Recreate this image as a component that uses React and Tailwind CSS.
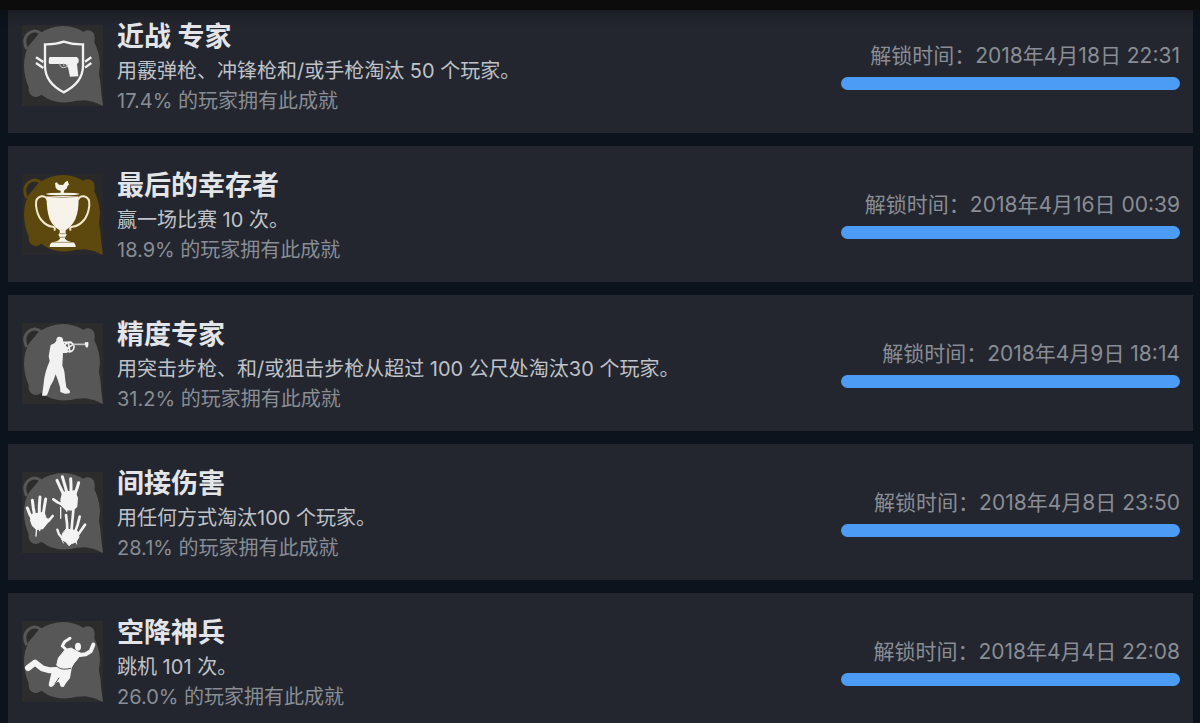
const achievements = [
  {
    id: "close",
    title: "近战 专家",
    text: "用霰弹枪、冲锋枪和/或手枪淘汰 50 个玩家。",
    percent: "17.4%",
    unlocked: "2018年4月18日 22:31",
    icon: PistolIcon,
  },
  {
    id: "survivor",
    title: "最后的幸存者",
    text: "赢一场比赛 10 次。",
    percent: "18.9%",
    unlocked: "2018年4月16日 00:39",
    icon: TrophyIcon,
    gold: true,
  },
  {
    id: "precision",
    title: "精度专家",
    text: "用突击步枪、和/或狙击步枪从超过 100 公尺处淘汰30 个玩家。",
    percent: "31.2%",
    unlocked: "2018年4月9日 18:14",
    icon: SoldierIcon,
  },
  {
    id: "indirect",
    title: "间接伤害",
    text: "用任何方式淘汰100 个玩家。",
    percent: "28.1%",
    unlocked: "2018年4月8日 23:50",
    icon: HandsIcon,
  },
  {
    id: "airborne",
    title: "空降神兵",
    text: "跳机 101 次。",
    percent: "26.0%",
    unlocked: "2018年4月4日 22:08",
    icon: DiverIcon,
  },
];

function PistolIcon() {
  return (
    <g transform="translate(-67 -76)">
      <path
        d="M136 134Q168 135 192 126Q218 135 250 134V200Q249 250 192 278Q137 250 136 200Z"
        fill="none"
        stroke="#f1f1f1"
        strokeWidth="7"
      />
      <path
        d="M148 174L151 172H232L234 175L237 178V188L232 193L236 230L211 231L206 207Q204 199 197 193H150L147 189Z"
        fill="#f1f1f1"
      />
      <path
        d="M180 191Q181 204 192 204Q203 204 205 194M192 191L193 200"
        fill="none"
        stroke="#c8c8c8"
        strokeWidth="3"
      />
      <path
        d="M109 173L131 187M109 190L131 205M275 173L256 186M275 190L256 204"
        stroke="#f1f1f1"
        strokeWidth="7"
      />
    </g>
  );
}

function TrophyIcon() {
  return (
    <g transform="translate(-67 -38)" fill="#f7f3ea">
      <path d="M166 66L171 63L178 70L190 71L197 62L204 58L206 66L209 69L204 73L202 81L194 87L192 95H183V88L174 86L168 79Z" />
      <ellipse cx="189" cy="98" rx="50" ry="4" />
      <path d="M141 104H236Q239 145 227 174Q216 196 198 207V216Q204 221 197 226L196 232Q202 240 220 243Q228 246 228 257H150Q150 246 158 243Q176 240 181 232L180 226Q173 221 180 216V207Q160 196 150 174Q140 145 141 104Z" />
      <path
        d="M143 117Q140 104 125 105Q107 109 109 132Q112 160 125 176Q141 195 159 196Q169 198 164 208M235 117Q238 104 253 105Q271 109 269 132Q266 160 253 176Q237 195 218 196Q208 198 213 208"
        fill="none"
        stroke="#f2e9cf"
        strokeWidth="6"
      />
      <path
        d="M142 105Q189 112 236 105M181 217H198M180 228H198M158 243H219"
        fill="none"
        stroke="#7d6b34"
        strokeWidth="2"
      />
    </g>
  );
}

function SoldierIcon() {
  return (
    <g transform="translate(-67 -36)" fill="#f1f1f1">
      <path d="M170 90Q169 77 180 77Q192 78 190 90L194 98L206 112L202 126L190 126L189 146L188 164Q195 176 196 200L200 229L211 240L210 247L196 248L182 243L181 228L174 206L168 190L161 209L152 225L144 248L140 254H127L129 240L131 226L134 200Q138 180 144 165L150 150L147 136L150 118L153 102L164 97Z" />
      <circle cx="209" cy="108" r="14" fill="none" stroke="#f1f1f1" strokeWidth="5" />
      <path
        d="M188 94H216M199 116L220 100M206 96L211 124"
        stroke="#f1f1f1"
        strokeWidth="5"
      />
      <path d="M220 100H262" stroke="#c4c4c4" strokeWidth="5" />
      <path d="M255 94L266 93V105L263 110L258 108Z" />
    </g>
  );
}

function HandsIcon() {
  return (
    <g
      transform="translate(-67 -37)"
      fill="#f4f4f4"
      stroke="#f4f4f4"
      strokeLinecap="round"
      strokeLinejoin="round"
    >
      <path
        d="M98 165L132 159L139 178L148 180L137 195L128 206L111 208L99 196L94 182Z"
        strokeWidth="6"
      />
      <path d="M99 180L90 163L83 145M105 168L101 145L98 122M119 165L119 138L121 112M130 168L134 142L138 118" strokeWidth="9" />
      <path d="M136 191L148 182L159 169" fill="none" strokeWidth="8" />
      <path d="M111 205L109 229M120 205V213" strokeWidth="4" />

      <path
        d="M190 99L224 95L232 115L230 140L220 150L199 149L187 137L185 120Z"
        strokeWidth="6"
      />
      <path d="M192 104L181 82L172 62M202 100L195 75L188 51M214 98L214 77L213 57M226 103L232 86L237 69" strokeWidth="9" />
      <path d="M191 136L174 128L161 119" fill="none" strokeWidth="8" />
      <path d="M183 143V176M219 148V163M201 149V155" strokeWidth="4" />

      <path
        d="M200 208L232 213L238 232L229 247L215 252L208 258L199 247L187 240L188 223Z"
        strokeWidth="3"
      />
      <path d="M203 216L202 191L199 166M215 216L218 184L221 152M226 218L234 195L240 171M233 228L245 211L256 195" strokeWidth="8" />
      <path d="M190 238L178 224L173 210" fill="none" strokeWidth="7" />
      <path d="M186 238L191 250M230 246L231 253" strokeWidth="3" />
    </g>
  );
}

function DiverIcon() {
  return (
    <g
      transform="translate(-67 -46)"
      fill="#f4f4f4"
      stroke="#f4f4f4"
      strokeLinecap="round"
      strokeLinejoin="round"
    >
      <ellipse cx="235" cy="123" rx="9" ry="12" stroke="none" />
      <path
        d="M197 132L214 127L230 136L244 143L235 158L222 174L213 189L196 193L176 187L171 179L176 158Z"
        strokeWidth="3"
      />
      <path d="M204 136L188 121L195 108L211 98" fill="none" strokeWidth="9" />
      <path d="M235 149L258 146L273 137L281 117" fill="none" strokeWidth="12" />
      <path d="M172 193L150 194L128 188L106 171L85 187" fill="none" strokeWidth="18" />
      <path d="M165 190L212 188L207 216L188 239L176 220L158 237Z" strokeWidth="8" />
      <path d="M162 204L154 237M204 205L188 237" strokeWidth="14" />
      <path
        d="M170 181Q182 193 202 190L213 188"
        fill="none"
        stroke="#555557"
        strokeWidth="3"
      />
      <path d="M178 217L166 234" stroke="#555557" strokeWidth="3" />
    </g>
  );
}

function Badge({ icon: Icon, gold }) {
  const color = gold ? "#5d490d" : "#575758";
  return (
    <svg
      viewBox="0 0 243 243"
      className="size-[81px] shrink-0"
      aria-hidden="true"
    >
      <rect width="243" height="243" fill={gold ? "#29292b" : "#2c2c2d"} />
      <path
        d="M50 26Q86 3 124 3Q160 5 184 20Q204 9 216 27Q220 40 217 52Q232 82 234 117L231 147L235 171L238 205L243 243L218 232L190 226L164 227Q118 240 78 222L58 209Q44 220 31 213Q18 206 20 187Q7 158 6 122Q6 88 20 62L34 46Z"
        fill={color}
      />
      <path
        d="M14 72Q0 42 20 25Q38 11 56 25"
        fill="none"
        stroke={color}
        strokeWidth="9"
      />
      <Icon />
    </svg>
  );
}

function Achievement({ item }) {
  return (
    <li className="flex min-h-[136px] items-center bg-[#23262e] pr-[13px] pl-[14px]">
      <Badge icon={item.icon} gold={item.gold} />
      <div className="ml-[14px] min-w-0 flex-1 pt-1">
        <h3 className="text-[27px] leading-[38px] font-bold text-[#e3e5e8]">
          {item.title}
        </h3>
        <p className="text-xl leading-[30px] text-[#bfc2c8]">{item.text}</p>
        <p className="text-xl leading-[30px] text-[#898d95]">
          {item.percent} 的玩家拥有此成就
        </p>
      </div>
      <div className="flex w-[339px] shrink-0 flex-col gap-[5px]">
        <p className="text-right text-[21px] leading-8 text-[#898d95]">
          解锁时间：{item.unlocked}
        </p>
        <div
          role="progressbar"
          aria-label={item.title}
          aria-valuenow={100}
          className="h-[13px] rounded-full bg-[#4c9bf5]"
        />
      </div>
    </li>
  );
}

export default function App() {
  return (
    <div className="h-screen overflow-hidden bg-[#0d131c] font-[Inter,'Noto_Sans_CJK_SC',sans-serif]">
      <header className="relative z-10 h-[10px] bg-[#0d0c0d] shadow-[0_2px_12px_rgba(13,12,13,0.6)]" />
      <main className="-mt-[13px] pr-[7px] pl-2">
        <ul className="flex flex-col gap-[13px]">
          {achievements.map((item) => (
            <Achievement key={item.id} item={item} />
          ))}
        </ul>
      </main>
    </div>
  );
}
